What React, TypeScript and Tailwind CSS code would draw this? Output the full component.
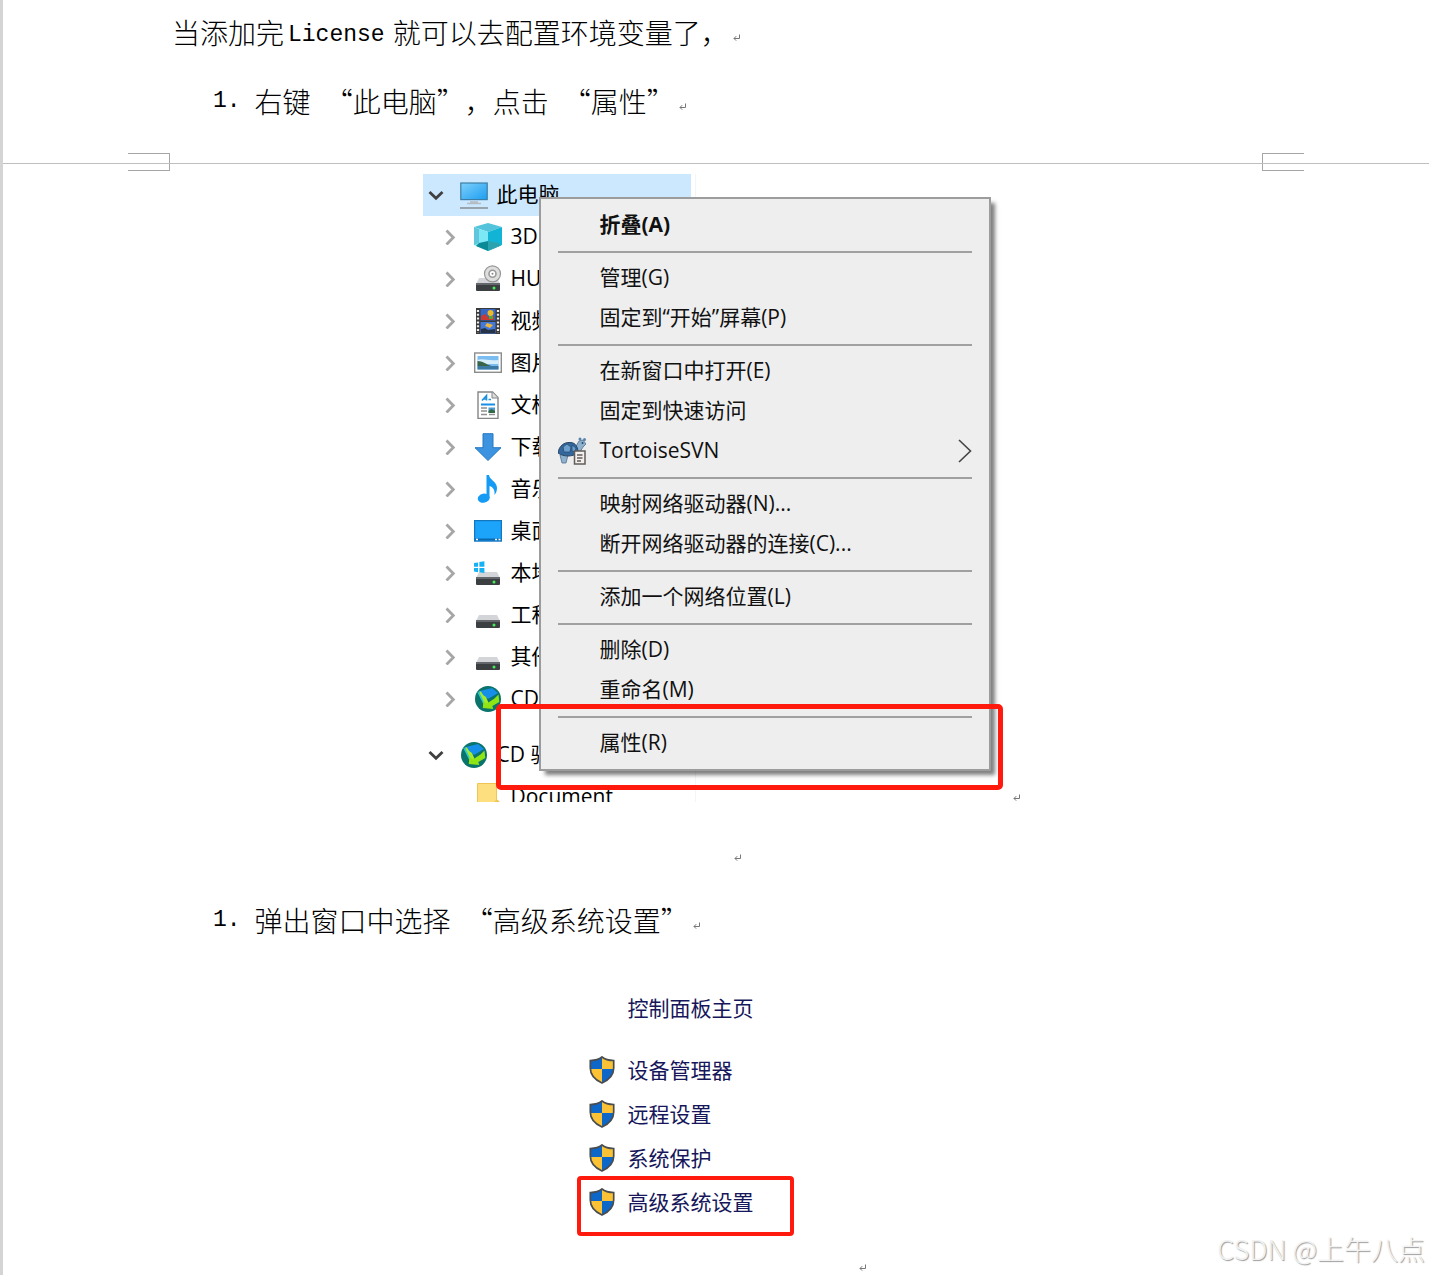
import type { ReactNode } from "react";

const ReturnMark = () => (
  <svg width="8" height="8" viewBox="0 0 8 8" fill="none" stroke="#777" className="shrink-0" aria-hidden="true">
    <path d="M6.5 .5v4H1M3.2 2.2 1 4.5l2.2 2.2" />
  </svg>
);

const ComputerIcon = () => (
  <svg width="28" height="28" viewBox="0 0 28 28">
    <defs>
      <linearGradient id="screen" x1="0" y1="0" x2="1" y2="1">
        <stop offset="0" stopColor="#7fd0fb" />
        <stop offset="1" stopColor="#1c9df0" />
      </linearGradient>
    </defs>
    <rect x=".8" y="2" width="26.4" height="16.6" fill="url(#screen)" stroke="#3d7ea6" strokeWidth="1.2" />
    <path d="M10 21h8M7 22.5h14" stroke="#b5bcc2" strokeWidth="1.5" />
    <path d="M0 27h28" stroke="#98a3ac" strokeWidth="2" />
  </svg>
);

const CubeIcon = () => (
  <svg width="28" height="28" viewBox="0 0 28 28">
    <path d="M0 4 14 0l14 4-14 5z" fill="#52c3da" />
    <path d="M0 4l14 5v19L0 22z" fill="#7de8f5" />
    <path d="M28 4 14 9v19l14-6z" fill="#12b4d6" />
    <path d="M5 20l9-2v10L2 23z" fill="#0a8a96" />
    <path d="M14 18l10 2 3 2.500L14 28z" fill="#2aa3ae" />
    <path d="M0 4l5 2v14l-5 2z" fill="#5fc6dc" />
  </svg>
);

const DriveBody = () => (
  <>
    <path d="M5 14h18l3 6H2z" fill="#d3d5d8" />
    <rect x="2" y="19" width="24" height="8" rx="1" fill="#3c3f42" />
    <rect x="2" y="19" width="24" height="2" fill="#63676b" />
    <circle cx="20" cy="24" r="1.5" fill="#43ef54" />
  </>
);

const DriveIcon = () => (
  <svg width="28" height="28" viewBox="0 0 28 28">
    <DriveBody />
  </svg>
);

const DiscDriveIcon = () => (
  <svg width="28" height="28" viewBox="0 0 28 28">
    <g transform="translate(0 -1)">
      <DriveBody />
    </g>
    <circle cx="18.500" cy="8.800" r="8" fill="#dedede" stroke="#979797" strokeWidth="1.2" />
    <circle cx="18.500" cy="8.800" r="3.500" fill="#fff" stroke="#999" strokeWidth="1.6" />
    <circle cx="18.500" cy="8.800" r="1" fill="#888" />
  </svg>
);

const SystemDriveIcon = () => (
  <svg width="28" height="28" viewBox="0 0 28 28">
    <g transform="translate(0 -1)">
      <DriveBody />
    </g>
    <path d="M0 4l4-.6v4.400H0zM5.400 3l5-.8v5.600h-5zM0 9h4v4.200L0 12.600zM5.400 9h5v5l-5-.7z" fill="#13b2f5" />
  </svg>
);

const VideoIcon = () => (
  <svg width="28" height="28" viewBox="0 0 28 28">
    <rect x="2" y="1" width="24" height="26" fill="#3a3a3a" />
    <path d="M4 3v23M24 3v23" stroke="#eee" strokeWidth="2.200" strokeDasharray="2 1.800" />
    <rect x="6.500" y="2" width="15" height="11.500" fill="#3667c4" />
    <rect x="6.500" y="15" width="15" height="11.500" fill="#4379d8" />
    <path d="M7 9l4-2 3 3 6-1v4H7z" fill="#c93a33" />
    <circle cx="16.500" cy="6" r="3" fill="#f0b928" />
    <path d="M7 22l4-1 3 2 7-1v4H7z" fill="#26344a" />
    <path d="M13 16l6 2-3 3-5-2z" fill="#eeb73d" />
    <path d="M15 9h4v3h-4z" fill="#4cab3b" />
  </svg>
);

const PictureIcon = () => (
  <svg width="28" height="28" viewBox="0 0 28 28">
    <rect x=".7" y="4" width="26.600" height="19.300" fill="#fff" stroke="#8c8c8c" strokeWidth="1.400" />
    <rect x="3.500" y="7" width="21" height="13.500" fill="#7bbdf0" />
    <path d="M3.500 11c6-2 9 1 21 0v4h-21z" fill="#d7eefb" />
    <path d="M3.500 12c5 0 8 3 14 5H3.500z" fill="#38644a" />
    <path d="M3.500 17h21v3.500h-21z" fill="#3a7aa5" />
  </svg>
);

const DocumentIcon = () => (
  <svg width="28" height="28" viewBox="0 0 28 28">
    <path d="M4 1h14.500L24 6.500V27.400H4z" fill="#fff" stroke="#858585" strokeWidth="1.400" />
    <path d="M18 1v6h6" fill="#ddd" stroke="#858585" />
    <path d="M8 9.500l4.500-5v5M9 8h4M14.500 8.500H17" stroke="#2291dc" strokeWidth="1.600" fill="none" />
    <path d="M7 13.500h14" stroke="#168ee6" strokeWidth="2" />
    <path d="M7 17h6M7 20h6M7 23.500h6" stroke="#8f8f8f" strokeWidth="1.400" />
    <path d="M14.500 16.500H21v5h-6.500z" fill="#4f98ce" />
    <path d="M14.500 20l3-2 3.500 2v2h-6.500z" fill="#366844" />
    <path d="M15 23.500h6" stroke="#8f8f8f" strokeWidth="1.400" />
  </svg>
);

const DownloadIcon = () => (
  <svg width="28" height="28" viewBox="0 0 28 28">
    <path d="M9 .7h10v14h8L14 27.500 1 14.700h8z" fill="#3c93e0" stroke="#2877c2" />
  </svg>
);

const MusicIcon = () => (
  <svg width="28" height="28" viewBox="0 0 28 28" fill="#159bf3">
    <path d="M12.500 0H15c.5 5 8 6.500 8 13 0 3-1 5-2.500 7 .5-5-1-7.500-5-9v12h-3z" />
    <ellipse cx="9.700" cy="23.200" rx="6" ry="4.500" transform="rotate(-12 9.700 23.200)" />
  </svg>
);

const DesktopIcon = () => (
  <svg width="28" height="28" viewBox="0 0 28 28">
    <rect x=".6" y="3.600" width="26.800" height="20.500" fill="#1ba4fa" stroke="#1476bd" strokeWidth="1.200" />
    <path d="M1 21.500h26v2H1z" fill="#0b69b4" />
    <path d="M2 22.500h2M21 22.500h2M24.500 22.500h2" stroke="#fff" strokeWidth="1.400" />
  </svg>
);

const GlobeIcon = () => (
  <svg width="28" height="28" viewBox="0 0 28 28">
    <circle cx="14" cy="14" r="13" fill="#09736c" />
    <path d="M4 6.500 18 3 24 8l-10 6z" fill="#168fe8" />
    <path d="M3 6.500l6 3 5 8-5 1z" fill="#2bcad1" />
    <path d="M5 6.500l2 0 2 3.500 3 2 3 7-4 0z" fill="#a6ea2c" />
    <path d="M20.500 13.500l4-4 .8 7.500-7 4 1 3-10.500-1 .5-7 3.500 2.500z" fill="#8fe414" />
  </svg>
);

const FolderIcon = () => (
  <svg width="28" height="28" viewBox="0 0 28 28">
    <path d="M3.500.5h19v16l2.500 2v9H3.500z" fill="#fddf80" stroke="#efc452" />
    <path d="M20 27v-8l2.500-2.500L25 18.500V27z" fill="#eec654" />
  </svg>
);

const TortoiseIcon = () => (
  <svg width="28" height="28" viewBox="0 0 28 28">
    <path d="M2 18l5-2 3 2-2 8H4zM17 11l4-7 4-1 3 4-3 3-3 5z" fill="#8db2cf" stroke="#506f8d" strokeWidth=".8" />
    <path d="M0 16C1 9 6 5 12 5.500c6 0 8 5 8 10.500-6 4-14 4-20 0z" fill="#34679b" stroke="#294766" />
    <path d="M5 10l4-3 4 3-1 5-6 0zM14 8l4 3-1 4-3-1z" fill="#6c9fca" stroke="#244e7c" strokeWidth=".8" />
    <circle cx="22" cy="2" r="1.500" fill="#5583ac" />
    <circle cx="26.500" cy="2.500" r="1.500" fill="#5583ac" />
    <circle cx="24.500" cy="6" r="1" fill="#294766" />
    <rect x="16.500" y="14" width="10.500" height="13" fill="#f3f0ed" stroke="#625c5a" strokeWidth="1.500" />
    <path d="M19 18h5.500M19 21h5.500M19 24h4" stroke="#625c5a" strokeWidth="1.400" />
  </svg>
);

const ShieldIcon = () => (
  <svg width="26" height="28" viewBox="0 0 26 28">
    <path d="M13 1C10 3.500 6 4.500 1.500 4.500V13H13z" fill="#0d67c8" />
    <path d="M13 1c3 2.500 7 3.500 11.500 3.500V13H13z" fill="#fcc236" />
    <path d="M1.500 13c.8 6 5 11 11.500 14V13z" fill="#fcc236" />
    <path d="M24.500 13C23.700 19 19.500 24 13 27V13z" fill="#0d67c8" />
    <path
      d="M13 1C10 3.500 6 4.500 1.300 4.500V12c0 7 5 12 11.700 15 6.700-3 11.700-8 11.700-15V4.500C20 4.500 16 3.500 13 1z"
      fill="none"
      stroke="#4a4d4f"
      strokeWidth="1.700"
    />
  </svg>
);

const Chevron = ({ open }: { open?: boolean }) => (
  <svg width="16" height="16" viewBox="0 0 16 16" fill="none" strokeWidth="2.800" className="shrink-0">
    {open ? <path d="M1.500 5 8 11.300 14.500 5" stroke="#404040" /> : <path d="M4.500 1.500 11.300 8.500 4.500 15.500" stroke="#a6a6a6" />}
  </svg>
);

type Node = { label: string; icon: ReactNode };

const children: Node[] = [
  { label: "3D 对象", icon: <CubeIcon /> },
  { label: "HU", icon: <DiscDriveIcon /> },
  { label: "视频", icon: <VideoIcon /> },
  { label: "图片", icon: <PictureIcon /> },
  { label: "文档", icon: <DocumentIcon /> },
  { label: "下载", icon: <DownloadIcon /> },
  { label: "音乐", icon: <MusicIcon /> },
  { label: "桌面", icon: <DesktopIcon /> },
  { label: "本地磁盘", icon: <SystemDriveIcon /> },
  { label: "工程", icon: <DriveIcon /> },
  { label: "其他", icon: <DriveIcon /> },
  { label: "CD 驱动器", icon: <GlobeIcon /> },
];

const menuGroups: string[][] = [
  ["折叠(A)"],
  ["管理(G)", "固定到“开始”屏幕(P)"],
  ["在新窗口中打开(E)", "固定到快速访问", "TortoiseSVN"],
  ["映射网络驱动器(N)...", "断开网络驱动器的连接(C)..."],
  ["添加一个网络位置(L)"],
  ["删除(D)", "重命名(M)"],
  ["属性(R)"],
];

const settings = ["设备管理器", "远程设置", "系统保护", "高级系统设置"];

function RootRow({ label, icon, active }: Node & { active?: boolean }) {
  return (
    <button className={`flex h-[42px] w-[268px] shrink-0 items-center pl-[5px] text-left ${active ? "bg-[#cce8ff]" : ""}`}>
      <Chevron open />
      <span className="ml-4">{icon}</span>
      <span className="ml-[9px] whitespace-nowrap pb-0.5">{label}</span>
    </button>
  );
}

function ContextMenu() {
  return (
    <div className="absolute left-[116px] top-[23px] w-[452px] border-2 border-[#9c9c9c] bg-[#eee] py-1.5 text-[#111] shadow-[5px_5px_4px_-1px_rgba(0,0,0,0.5)]">
      {menuGroups.map((group, i) => (
        <div key={i}>
          {i > 0 && <div className="mx-[17px] my-[5px] mt-1.5 h-0.5 bg-[#a0a0a0]" />}
          {group.map((item) => (
            <button key={item} className={`flex h-10 w-full items-center px-[17px] text-left ${i === 0 ? "font-bold" : ""}`}>
              <span className="mr-3.5 w-7">{item === "TortoiseSVN" && <TortoiseIcon />}</span>
              <span className="grow pb-0.5">{item}</span>
              {item === "TortoiseSVN" && (
                <svg width="14" height="24" viewBox="0 0 14 24" fill="none" stroke="#444" strokeWidth="1.600">
                  <path d="M1 1l11.500 11L1 23" />
                </svg>
              )}
            </button>
          ))}
        </div>
      ))}
    </div>
  );
}

function ExplorerFigure() {
  return (
    <div className="relative h-[628px] w-[586px] shrink-0 font-['Open_Sans','Noto_Sans_CJK_SC',sans-serif] text-[21px] leading-[28px] text-black">
      <div className="flex h-full w-[273px] flex-col overflow-hidden border-r border-[#f5f5f5]">
        <RootRow label="此电脑" icon={<ComputerIcon />} active />
        {children.map((node) => (
          <button key={node.label} className="flex h-[42px] shrink-0 items-center pl-[19px] text-left">
            <Chevron />
            <span className="ml-4">{node.icon}</span>
            <span className="ml-[9px] whitespace-nowrap pb-0.5">{node.label}</span>
          </button>
        ))}
        <div className="h-3.5 shrink-0" />
        <RootRow label="CD 驱动器" icon={<GlobeIcon />} />
        <button className="flex h-[42px] shrink-0 items-center pl-[51px] text-left">
          <FolderIcon />
          <span className="ml-[9px] pb-0.5">Document</span>
        </button>
      </div>
      <ContextMenu />
      <div className="pointer-events-none absolute left-[73px] top-[530px] h-[86px] w-[507px] rounded-[5px] border-[5px] border-[#ff1a0d]" />
    </div>
  );
}

function SettingsFigure() {
  return (
    <div className="relative w-[278px] shrink-0 pb-12 font-['Open_Sans','Noto_Sans_CJK_SC',sans-serif] text-[21px] leading-[28px] text-[#16165a]">
      <a href="#home" className="ml-[51px] block">
        控制面板主页
      </a>
      <ul className="mt-[26px]">
        {settings.map((label) => (
          <li key={label}>
            <a href="#settings" className="flex h-11 items-center gap-[13px] pl-3">
              <ShieldIcon />
              {label}
            </a>
          </li>
        ))}
      </ul>
      <div className="pointer-events-none absolute left-0 top-[182px] h-[60px] w-[217px] rounded-[4px] border-4 border-[#ff1a0d]" />
    </div>
  );
}

function PageBreak() {
  return (
    <div className="relative mt-[15px] flex h-[18px] justify-between px-[125px]">
      <div className="w-[42px] border-y border-r border-[#a6a6a6]" />
      <div className="w-[42px] border-y border-l border-[#a6a6a6]" />
      <div className="absolute inset-x-0 top-2.5 h-px bg-[#bfbfbf]" />
    </div>
  );
}

const Latin = ({ children }: { children: ReactNode }) => <span className="font-['Liberation_Mono',monospace] text-[23px]">{children}</span>;

const LineEnd = () => (
  <span className="pl-1 pt-3">
    <ReturnMark />
  </span>
);

export default function App() {
  return (
    <div
      lang="zh-CN"
      className="relative min-h-screen overflow-hidden border-l-[3px] border-[#d4d4d4] bg-white font-['Noto_Sans_CJK_SC',sans-serif] text-[28px] font-light leading-[40px] text-black [text-spacing-trim:space-all]"
    >
      <p className="flex h-[69px] items-center pb-1.5 pl-[169px]">
        当添加完
        <span className="ml-1 mr-2">
          <Latin>License</Latin>
        </span>
        就可以去配置环境变量了，
        <LineEnd />
      </p>
      <div className="flex h-[69px] items-center gap-3.5 pb-1.5 pl-[210px]">
        <Latin>1.</Latin>
        <span>右键</span>
        <span>“此电脑”，点击</span>
        <span className="flex items-center">
          “属性”
          <LineEnd />
        </span>
      </div>

      <PageBreak />

      <div className="mt-[3px] flex items-end justify-center gap-1 pl-[11px] font-normal">
        <ExplorerFigure />
        <ReturnMark />
      </div>
      <div className="flex h-[86px] items-center justify-center pl-[43px] pt-[26px]">
        <ReturnMark />
      </div>

      <div className="flex h-[69px] items-center gap-3.5 pb-1.5 pl-[210px]">
        <Latin>1.</Latin>
        <span>弹出窗口中选择</span>
        <span className="flex items-center">
          “高级系统设置”
          <LineEnd />
        </span>
      </div>

      <div className="mt-[37px] flex items-end justify-center gap-1 pl-[11px] font-normal">
        <SettingsFigure />
        <ReturnMark />
      </div>

      <div className="absolute bottom-1.5 right-1 text-[27px] text-[#f2f2f2] [text-shadow:1px_1px_1px_#999]">CSDN @上午八点</div>
    </div>
  );
}
